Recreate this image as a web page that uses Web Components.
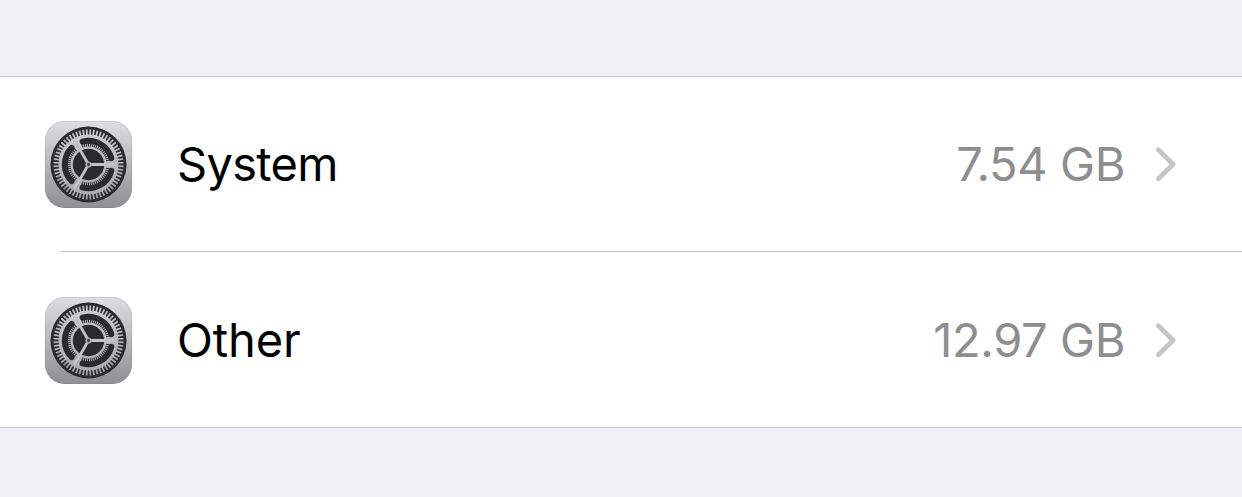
<!DOCTYPE html>
<html lang="en">
<head>
<meta charset="utf-8">
<title>Storage</title>
<style>
  body {
    margin: 0;
    background: #f0f0f5;
    font-family: Inter, "Liberation Sans", sans-serif;
  }
</style>
</head>
<body>
<storage-list>
  <storage-row label="System" size="7.54 GB"></storage-row>
  <storage-row label="Other" size="12.97 GB" style="--label-spacing: -0.1px"></storage-row>
</storage-list>

<script>
class StorageList extends HTMLElement {
  connectedCallback() {
    this.attachShadow({ mode: 'open' });
    this.shadowRoot.innerHTML = `<style>
      :host {
        display: block;
        box-sizing: border-box;
        height: 497px;
        padding-top: 76px;
      }
      .group {
        display: flex;
        flex-direction: column;
        background: #fff;
        border-top: 1px solid #c6c6ca;
        border-bottom: 1px solid #c6c6ca;
      }
      ::slotted(storage-row:not(:first-child)) {
        --row-top: 45px;
      }
      ::slotted(storage-row:not(:last-child)) {
        --line: #c6c6c8;
        --line-height: 1px;
      }
    </style>
    <div class="group"><slot></slot></div>`;
  }
}

class GearIcon extends HTMLElement {
  connectedCallback() {
    let angles = [0, 120, 240];
    this.attachShadow({ mode: 'open' });
    this.shadowRoot.innerHTML = `<style>
      :host { display: block; flex: none; width: 87px; height: 87px; }
      svg { display: block; }
      .gear { filter: blur(0.6px); }
    </style>
    <svg width="87" height="87" viewBox="-43.5 -43.5 87 87" fill="none">
      <defs>
        <linearGradient id="bg" x1="0" y1="0" x2="0" y2="1">
          <stop offset="0" stop-color="#dedee3"/>
          <stop offset="1" stop-color="#8e8e93"/>
        </linearGradient>
        <linearGradient id="metal" gradientUnits="userSpaceOnUse" x1="0" y1="-36" x2="0" y2="36">
          <stop offset="0" stop-color="#cdcdd2"/>
          <stop offset="1" stop-color="#a6a6ab"/>
        </linearGradient>
      </defs>
      <rect x="-43.5" y="-43.5" width="87" height="87" rx="19.5" fill="url(#bg)"/>
      <rect x="-43" y="-43" width="86" height="86" rx="19" stroke="#77777d" stroke-opacity=".2"/>
      <g class="gear">
        <circle r="38" fill="#2b2b2e"/>
        <g stroke="url(#metal)">${this.teeth(60, 29, 35, 1.7)}</g>
        <circle r="22.8" stroke="url(#metal)" stroke-width="14.2"/>
        <g stroke="#38383b">${angles.map((a) => this.notches(a)).join('')}</g>
        ${angles.map((a) => this.slot_(a)).join('')}
        ${angles.map((a) => `<path transform="rotate(${a})" d="M0 0H27" stroke="#c2c2c7" stroke-width="2.8" stroke-linecap="round"/>`).join('')}
        <circle r="3.1" fill="#a9a9ae"/>
        <circle r="1.4" fill="#3c3c40"/>
      </g>
    </svg>`;
  }
  point(r, deg) {
    let a = deg * Math.PI / 180;
    return `${(Math.cos(a) * r).toFixed(2)} ${(Math.sin(a) * r).toFixed(2)}`;
  }
  // radial strokes, one for each tooth of a wheel
  teeth(count, inner, outer, width) {
    let d = '';
    for (let i = 0; i < count; i++) {
      let deg = (i + 0.5) * 360 / count;
      d += `M${this.point(inner, deg)}L${this.point(outer, deg)}`;
    }
    return `<path d="${d}" stroke-width="${width}"/>`;
  }
  // gaps between the teeth of the small wheel, clear of the spokes
  notches(angle) {
    let d = '';
    for (let deg = 12; deg <= 108; deg += 6) {
      d += `M${this.point(17.9, angle + deg)}L${this.point(22, angle + deg)}`;
    }
    return `<path d="${d}" stroke-width="1.2"/>`;
  }
  // dark opening between two spokes
  slot_(angle) {
    return `<path d="M${this.point(23.7, angle + 15.5)}A23.7 23.7 0 0 1 ${this.point(23.7, angle + 104.5)}" stroke="#2b2b2e" stroke-width="6" stroke-linecap="round"/>`;
  }
}

class StorageRow extends HTMLElement {
  connectedCallback() {
    let label = this.getAttribute('label');
    let size = this.getAttribute('size');
    this.attachShadow({ mode: 'open' });
    this.shadowRoot.innerHTML = `<style>
      :host { display: block; }
      .row {
        display: flex;
        align-items: center;
        height: 87px;
        padding: var(--row-top, 44px) 65px 43px 45px;
        font-size: 47px;
        line-height: 60px;
        white-space: nowrap;
      }
      .label, .size { padding-bottom: 1px; }
      .label { margin-left: 45px; color: #000; letter-spacing: var(--label-spacing, -0.7px); }
      .size { margin-left: auto; color: #8e8e8e; letter-spacing: -0.4px; }
      .chevron { display: block; flex: none; margin: 0 0 1px 30px; }
      .line {
        height: var(--line-height, 0);
        margin-left: 60px;
        background: var(--line, none);
      }
    </style>
    <div class="row">
      <gear-icon></gear-icon>
      <span class="label">${label}</span>
      <span class="size">${size}</span>
      <svg class="chevron" width="22" height="36" viewBox="0 0 22 36" fill="none">
        <path d="M3.4 3.7 18.1 18.2 3.4 32.7" stroke="#c5c5c7" stroke-width="4.8" stroke-linecap="round" stroke-linejoin="round"/>
      </svg>
    </div>
    <div class="line"></div>`;
  }
}

customElements.define('storage-list', StorageList);
customElements.define('gear-icon', GearIcon);
customElements.define('storage-row', StorageRow);
</script>
</body>
</html>
